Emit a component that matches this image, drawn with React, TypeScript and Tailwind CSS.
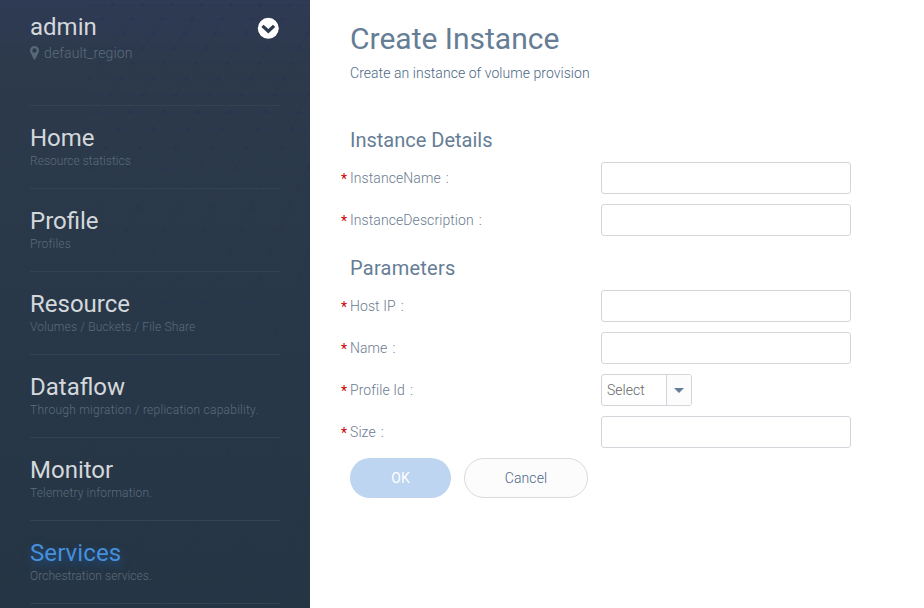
import React from "react";

type MeshRow = { y: number; x: number; step: number };

const meshRows: MeshRow[] = [
  { y: 5, x: 113, step: 29.5 },
  { y: 19, x: 102, step: 30 },
  { y: 33, x: 93, step: 30.6 },
  { y: 48, x: 112, step: 31.2 },
  { y: 63, x: 100, step: 31.8 },
  { y: 78, x: 89, step: 32.4 },
  { y: 95, x: 110, step: 33 },
  { y: 112, x: 96, step: 33.8 },
  { y: 129, x: 119, step: 34.6 },
  { y: 148, x: 105, step: 35.4 },
  { y: 168, x: 92, step: 36 },
  { y: 187, x: 113, step: 37 },
  { y: 208, x: 100, step: 37.8 },
  { y: 230, x: 126, step: 38.5 },
  { y: 253, x: 112, step: 39.5 },
  { y: 278, x: 98, step: 40.3 },
  { y: 303, x: 123, step: 41.3 },
  { y: 330, x: 107, step: 42.3 },
  { y: 358, x: 93, step: 43 },
  { y: 388, x: 121, step: 44.2 },
  { y: 419, x: 104, step: 46 },
  { y: 452, x: 134, step: 47 },
  { y: 488, x: 115, step: 49 },
  { y: 525, x: 98, step: 50 },
  { y: 565, x: 130, step: 52 },
  { y: 608, x: 108, step: 54 },
];

const nodesOf = (row: MeshRow) =>
  Array.from({ length: 10 }, (_, i) => row.x + (i - 1) * row.step).filter((x) => x > 84 && x < 330);

function Mesh() {
  return (
    <svg className="absolute inset-0" width="310" height="608" fill="none" stroke="#2c3158">
      {meshRows.map((row, i) => {
        const next = meshRows[i + 1];
        const fade = 0.9 - row.y / 1100;
        return (
          <g key={row.y} opacity={fade}>
            <path d={`M87 ${row.y + 0.5}H310`} strokeOpacity="0.28" />
            {nodesOf(row).map((x) => {
              const target = next
                ? nodesOf(next).find((n) => Math.abs(n - (x - (next.y - row.y) * 0.6)) < next.step / 2)
                : undefined;
              return (
                <g key={x}>
                  <circle cx={x} cy={row.y} r="1.8" fill="#2b305a" fillOpacity="0.5" stroke="none" />
                  {target !== undefined && next && (
                    <path d={`M${x} ${row.y}L${target} ${next.y}`} strokeOpacity="0.36" />
                  )}
                </g>
              );
            })}
          </g>
        );
      })}
    </svg>
  );
}

const menu = [
  { title: "Home", text: "Resource statistics", spacing: "tracking-[0.03px]" },
  { title: "Profile", text: "Profiles", spacing: "tracking-[0.15px]" },
  { title: "Resource", text: "Volumes / Buckets / File Share", spacing: "tracking-[0.15px]" },
  { title: "Dataflow", text: "Through migration / replication capability.", spacing: "tracking-[0.25px]" },
  { title: "Monitor", text: "Telemetry information.", spacing: "tracking-[0.14px]" },
  { title: "Services", text: "Orchestration services.", spacing: "tracking-[0.07px]", active: true },
];

function Sidebar() {
  return (
    <aside className="relative h-full w-[310px] shrink-0 overflow-hidden bg-linear-to-b from-[#2f3a54] via-[#2c3a4b] via-12% to-[#253544]">
      <Mesh />
      <div className="relative px-[30px]">
        <header className="flex h-[105px] justify-between pt-3">
          <div>
            <div className="text-2xl leading-[30px] text-[#d4d8dc]">admin</div>
            <div className="mt-0.5 flex items-center text-sm leading-[18px] font-light tracking-[0.12px] text-[#5c6b7b]">
              <svg width="9" height="14" viewBox="0 0 9 14" className="mr-[5px] mb-px" fill="#596878">
                <path
                  fillRule="evenodd"
                  d="M4.5 0A4.5 4.5 0 0 0 0 4.5c0 1 .2 1.500.5 2L3.600 13c.4.8 1.400.8 1.800 0L8.500 6.500c.3-.5.5-1 .5-2A4.500 4.500 0 0 0 4.500 0Zm0 2.300a2.200 2.200 0 1 1 0 4.400 2.200 2.200 0 0 1 0-4.400Z"
                />
              </svg>
              default_region
            </div>
          </div>
          <svg width="22" height="22" viewBox="0 0 22 22" className="mt-[5px] mr-px">
            <circle cx="11.300" cy="11.300" r="10.500" fill="#fff" />
            <path d="M5.500 8.800L11.300 14.200L17.100 8.800" fill="none" stroke="#2c3a50" strokeWidth="3.200" />
          </svg>
        </header>
        <nav className="w-[250px]">
          {menu.map((item) => (
            <div key={item.title} className="h-[83px] border-t border-[#33434f] pt-[17px]">
              <div
                className={
                  item.active
                    ? "text-2xl leading-[30px] tracking-[0.1px] text-[#468fdb] [text-shadow:0_4px_8px_rgba(30,110,200,0.55)]"
                    : "text-2xl leading-[30px] text-[#d4d8dc]"
                }
              >
                {item.title}
              </div>
              <div className={`text-xs leading-4 font-light whitespace-nowrap text-[#5c6b7b] ${item.spacing}`}>
                {item.text}
              </div>
            </div>
          ))}
          <div className="border-t border-[#33434f]" />
        </nav>
      </div>
    </aside>
  );
}

function Row({ label, children }: { label: string; children?: React.ReactNode }) {
  return (
    <div className="mb-2.5 flex h-8 items-center">
      <label className="flex w-[261px] items-center text-sm font-light text-[#6b7b8f]">
        <span className="ml-px w-[9px] pt-px font-normal text-[#c00]">*</span>
        <span className="tracking-[0.08px]">{label}</span>
        <span className="ml-[5px]">:</span>
      </label>
      {children ?? <input className="h-8 w-[250px] rounded-[3px] border border-[#d3d5da] bg-white outline-none" />}
    </div>
  );
}

export default function App() {
  return (
    <div className="flex h-[608px] w-[924px] overflow-hidden bg-white font-[Roboto,sans-serif]">
      <Sidebar />
      <main className="flex-1 pt-5 pl-[30px] text-[#657d95]">
        <h1 className="ml-2.5 text-[30px] leading-[38px]">Create Instance</h1>
        <p className="mt-1.5 ml-2.5 text-sm leading-[18px] font-light tracking-[0.05px] text-[#4c6784]">
          Create an instance of volume provision
        </p>
        <h2 className="mt-[46px] ml-2.5 text-xl leading-6">Instance Details</h2>
        <div className="mt-2.5">
          <Row label="InstanceName" />
          <Row label="InstanceDescription" />
        </div>
        <h2 className="mt-5 ml-2.5 text-xl leading-6 tracking-[0.25px]">Parameters</h2>
        <div className="mt-2.5">
          <Row label="Host IP" />
          <Row label="Name" />
          <Row label="Profile Id">
            <div className="flex h-8 w-[91px] overflow-hidden rounded-[3px] border border-[#d3d5da] text-sm font-light text-[#666]">
              <span className="flex w-[64px] items-center pl-[5px]">Select</span>
              <span className="flex flex-1 items-center justify-center border-l border-[#d3d5da] bg-[#fcfcfd]">
                <svg width="10" height="5" viewBox="0 0 10 5" fill="#657d95">
                  <path d="M0 0H10L5 5Z" />
                </svg>
              </span>
            </div>
          </Row>
          <Row label="Size" />
        </div>
        <div className="ml-2.5 flex gap-[13px] text-sm font-light">
          <button className="h-10 w-[101px] rounded-full bg-[#bdd5f0] font-normal text-white">OK</button>
          <button className="h-10 w-[124px] rounded-full border border-[#d9dadd] bg-[#fcfcfd] tracking-[0.1px] text-[#4c6784]">
            Cancel
          </button>
        </div>
      </main>
    </div>
  );
}
